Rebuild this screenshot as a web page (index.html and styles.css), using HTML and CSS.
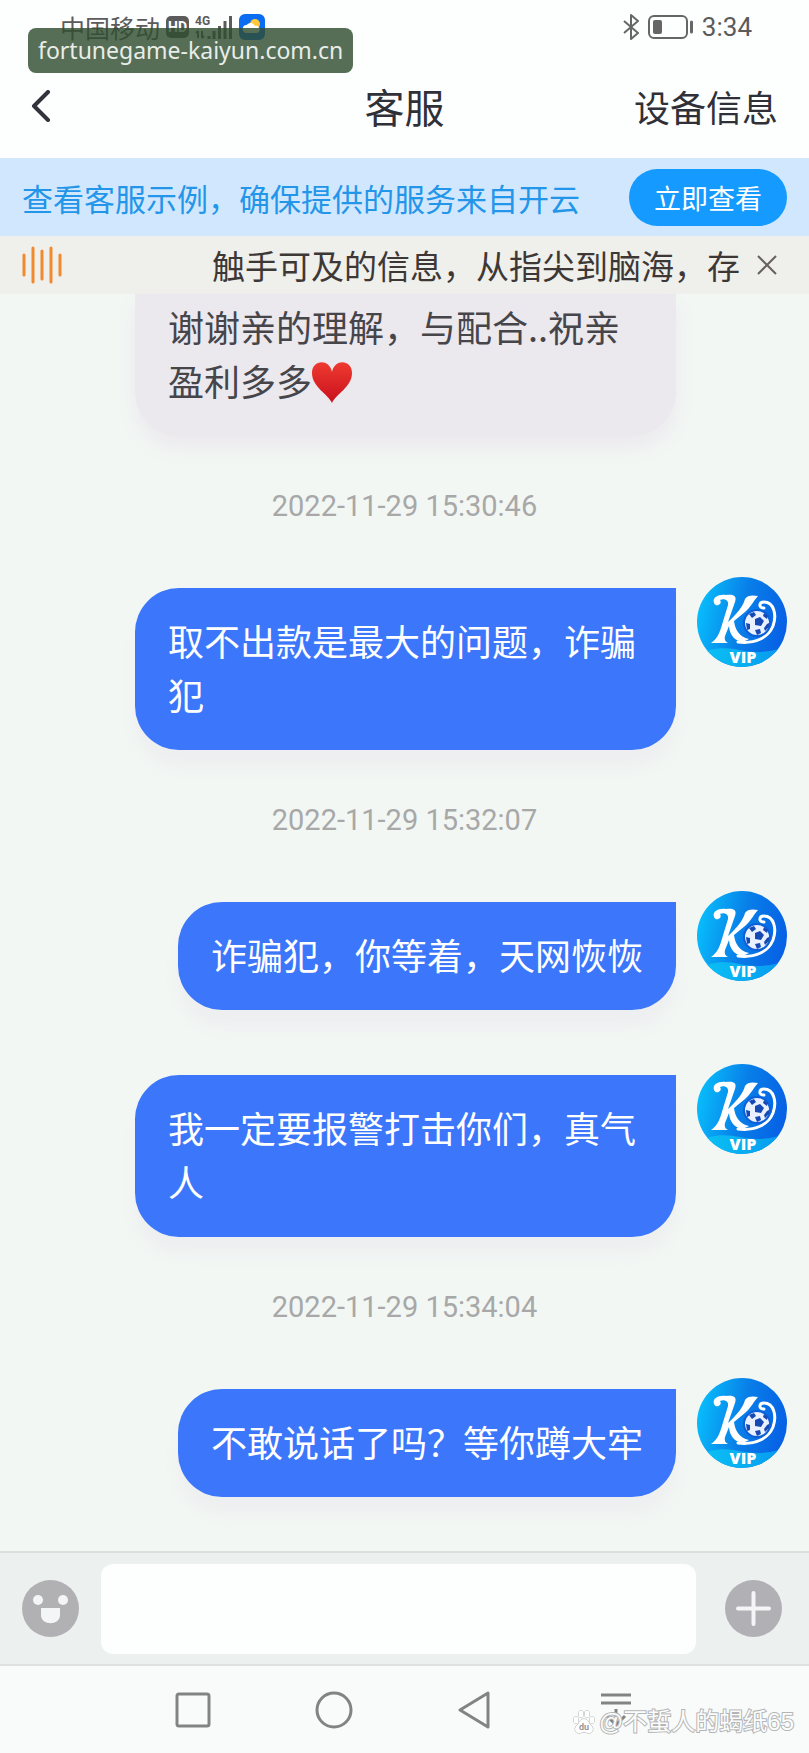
FILE: index.html
```html
<!DOCTYPE html>
<html lang="zh-CN">
<head>
<meta charset="utf-8">
<meta name="viewport" content="width=device-width, initial-scale=1">
<title>客服</title>
<link rel="stylesheet" href="styles.css">
</head>
<body>
<svg class="defs" width="0" height="0" aria-hidden="true">
  <defs>
    <linearGradient id="disc" x1="0" y1="0.4" x2="1" y2="0.6">
      <stop offset="0" stop-color="#08bdfb"/><stop offset="0.5" stop-color="#087ee8"/><stop offset="1" stop-color="#075fe5"/>
    </linearGradient>
    <linearGradient id="wave" x1="0" y1="0" x2="1" y2="0">
      <stop offset="0" stop-color="#0bc4f4"/><stop offset="1" stop-color="#0798ef"/>
    </linearGradient>
    <clipPath id="round"><circle cx="45" cy="45" r="45"/></clipPath>
    <symbol id="avatar" viewBox="0 0 90 90">
      <g clip-path="url(#round)">
        <rect width="90" height="90" fill="url(#disc)"/>
        <path d="M0 80C16 68 32 71 48 74C64 76 78 75 90 68V90H0Z" fill="url(#wave)"/>
      </g>
      <path d="M17 26C15 20 22 17 29 18C37 17 40 19 38 25L31 45C41 36 46 29 48 22C50 18 56 18 61 19C57 23 54 30 48 35L37 44C38 52 42 60 52 62C43 68 33 62 32 49L28 59C27 63 29 65 31 66H14C20 62 22 57 24 51L31 28C32 23 27 21 23 23C26 27 19 31 17 26Z" fill="#fff"/>
      <path d="M67 31C61 31 62 25 67 25C77 25 80 38 76 49C71 61 58 67 41 65" fill="none" stroke="#fff" stroke-width="3" stroke-linecap="round"/>
      <circle cx="60" cy="46" r="13" fill="#e9f0ff" stroke="#0b5fd9" stroke-width="2"/>
      <path d="M58 42l5-2 4 4-3 5-6-1zM52 37l5-2 2 3-4 3zM67 36l4 3-1 3-4-3zM49 46l4 1 0 5-3 1zM58 53l5-1 1 4-4 2zM70 47l2-1 0 4-4 4-1-3z" fill="#1749b4"/>
      <text x="46" y="86" text-anchor="middle" class="vip">VIP</text>
    </symbol>
  </defs>
</svg>

<div class="screen">
  <div class="site-tag">fortunegame-kaiyun.com.cn</div>

  <div class="status">
    <div class="status-side network">
      <span class="carrier">中国移动</span>
      <span class="hd">HD</span>
      <svg width="38" height="26" viewBox="0 0 38 26" aria-label="4G">
        <text x="0" y="11" class="net">4G</text>
        <path d="M3 17v7M1 19l2-2M7 17v7M9 22l-2 2" stroke="#5b5b5b" stroke-width="2" fill="none"/>
        <path d="M14 22v3M19 17v8M24.500 12v13M30 7v18M35.500 2v23" stroke="#5b5b5b" stroke-width="3"/>
      </svg>
      <svg width="26" height="26" viewBox="0 0 26 26" aria-hidden="true">
        <rect width="26" height="26" rx="6" fill="#0a6cf0"/>
        <circle cx="16" cy="10" r="5" fill="#ffc83a"/>
        <path d="M8 19a4 4 0 0 1-.5-8A5 5 0 0 1 16 12a3.500 3.500 0 0 1 2 7z" fill="#fff"/>
      </svg>
    </div>
    <div class="status-side">
      <svg width="18" height="26" viewBox="0 0 18 26" fill="none" stroke="#666" stroke-width="2" stroke-linejoin="round" aria-hidden="true"><path d="M2 7l14 12-7 6V1l7 6L2 19"/></svg>
      <svg width="46" height="24" viewBox="0 0 46 24" aria-hidden="true"><rect x="1" y="1" width="38" height="22" rx="5" fill="none" stroke="#666" stroke-width="2"/><rect x="5" y="5" width="9" height="14" rx="2" fill="#666"/><path d="M43.500 7v10" stroke="#666" stroke-width="3" stroke-linecap="round"/></svg>
      <span class="clock">3:34</span>
    </div>
  </div>

  <header class="header">
    <button class="icon-button back" aria-label="返回"><svg width="20" height="32" viewBox="0 0 20 32" fill="none" stroke="#33333d" stroke-width="4" stroke-linecap="round" stroke-linejoin="round"><path d="M17 2L3 16l14 14"/></svg></button>
    <h1>客服</h1>
    <button class="device">设备信息</button>
  </header>

  <div class="banner">
    <span>查看客服示例，确保提供的服务来自开云</span>
    <button class="pill">立即查看</button>
  </div>

  <div class="ticker">
    <svg width="40" height="38" viewBox="0 0 40 38" stroke="#f0892f" stroke-width="3" stroke-linecap="round" aria-hidden="true"><path d="M2 9v20M11 2v34M20 5v28M29 2v34M38 9v20"/></svg>
    <p>触手可及的信息，从指尖到脑海，存</p>
    <button class="icon-button" aria-label="关闭"><svg width="20" height="20" viewBox="0 0 20 20" stroke="#66615f" stroke-width="2"><path d="M1 1l18 18M19 1L1 19"/></svg></button>
  </div>

  <main class="chat">
    <div class="bubble received">谢谢亲的理解，与配合..祝亲盈利多多<svg class="heart" viewBox="0 0 40 42" role="img" aria-label="红心"><defs><linearGradient id="red" x1="0" y1="0" x2="0" y2="1"><stop offset="0" stop-color="#ee3a30"/><stop offset="1" stop-color="#c9101c"/></linearGradient></defs><path d="M20 41C16 32 0 25 0 11C0-2 17-4 20 10C23-4 40-2 40 11C40 25 24 32 20 41Z" fill="url(#red)"/></svg></div>
    <time>2022-11-29 15:30:46</time>
    <div class="message"><div class="bubble sent">取不出款是最大的问题，诈骗犯</div><svg class="avatar"><use href="#avatar"/></svg></div>
    <time>2022-11-29 15:32:07</time>
    <div class="message"><div class="bubble sent">诈骗犯，你等着，天网恢恢</div><svg class="avatar"><use href="#avatar"/></svg></div>
    <div class="message"><div class="bubble sent">我一定要报警打击你们，真气人</div><svg class="avatar"><use href="#avatar"/></svg></div>
    <time>2022-11-29 15:34:04</time>
    <div class="message"><div class="bubble sent">不敢说话了吗？等你蹲大牢</div><svg class="avatar"><use href="#avatar"/></svg></div>
  </main>

  <form class="composer">
    <button type="button" class="icon-button" aria-label="表情"><svg width="57" height="57" viewBox="0 0 57 57"><circle cx="28.500" cy="28.500" r="28.500" fill="#b1b0b3"/><circle cx="16" cy="20" r="5" fill="#f3f5f6"/><circle cx="41" cy="20" r="5" fill="#f3f5f6"/><path d="M19 28h19v7c0 11-19 11-19 0z" fill="#f3f5f6"/></svg></button>
    <input type="text" aria-label="输入消息">
    <button type="button" class="icon-button more" aria-label="更多"><svg width="57" height="57" viewBox="0 0 57 57"><circle cx="28.500" cy="28.500" r="28.500" fill="#b0b0b5"/><path d="M28.500 13v31M13 28.500h31" stroke="#f5f5f8" stroke-width="4" stroke-linecap="round"/></svg></button>
  </form>

  <nav class="system-nav" aria-label="系统导航">
    <button class="icon-button" aria-label="最近任务"><svg width="38" height="38" viewBox="0 0 38 38"><rect x="3" y="3" width="32" height="32" rx="2"/></svg></button>
    <button class="icon-button" aria-label="主页"><svg width="38" height="38" viewBox="0 0 38 38"><circle cx="19" cy="19" r="17"/></svg></button>
    <button class="icon-button" aria-label="后退"><svg width="38" height="38" viewBox="0 0 38 38"><path d="M32 2v34L4 19z"/></svg></button>
    <button class="icon-button" aria-label="通知栏"><svg width="38" height="38" viewBox="0 0 38 38"><path d="M4 4h30M4 12h30M19 18v16M10 25l9 9 9-9"/></svg></button>
  </nav>

  <div class="credit">
    <svg width="22" height="24" viewBox="0 0 22 24" fill="#fff" stroke="#aaa" aria-hidden="true"><ellipse cx="3" cy="10" rx="2.500" ry="3.500"/><ellipse cx="8" cy="4" rx="2.500" ry="3.500"/><ellipse cx="14" cy="4" rx="2.500" ry="3.500"/><ellipse cx="19" cy="10" rx="2.500" ry="3.500"/><path d="M11 9c4 0 4 4 7 6 4 4 1 9-3 8-3-1-5-1-8 0-4 1-7-4-3-8 3-2 3-6 7-6z"/><text x="11" y="20" text-anchor="middle" class="du">du</text></svg>
    <span>@不蜇人的蝎纸65</span>
  </div>
</div>
</body>
</html>
```

FILE: styles.css
```css
* { box-sizing: border-box; }

body {
  margin: 0;
  font-family: "Noto Sans CJK SC", sans-serif;
  color: #303038;
}

button {
  border: 0;
  padding: 0;
  background: none;
  font: inherit;
  color: inherit;
}

h1, p { margin: 0; font-weight: 400; }
svg { display: block; flex: none; }
.defs { position: absolute; }
.icon-button { display: flex; flex: none; }

.screen {
  position: relative;
  display: flex;
  flex-direction: column;
  min-height: 100vh;
  background: #f2f7f4;
}

.site-tag {
  position: absolute;
  z-index: 1;
  top: 28px;
  left: 28px;
  padding: 0 10px;
  border-radius: 8px;
  background: rgba(48, 76, 47, 0.81);
  color: #e9ede9;
  font: 23px/45px "Noto Sans", sans-serif;
}

.status {
  display: flex;
  justify-content: space-between;
  align-items: center;
  height: 54px;
  padding: 0 57px 0 60px;
  background: #fdfefe;
  color: #5b5b5b;
}

.status-side { display: flex; align-items: center; gap: 8px; }
.network { gap: 6px; }
.carrier { font-size: 25px; line-height: 36px; }
.hd {
  width: 23px;
  border-radius: 5px;
  background: #5b5b5b;
  color: #fff;
  font: 700 14px/22px Roboto, sans-serif;
  text-align: center;
}
.net { font: 700 12px Roboto, sans-serif; fill: #5b5b5b; }
.clock { font: 26px/32px Roboto, sans-serif; }

.header {
  display: grid;
  grid-template-columns: 1fr auto 1fr;
  align-items: center;
  height: 104px;
  padding: 0 31px;
  background: #fdfefe;
}
.header h1 { font-size: 40px; line-height: 56px; }
.device { justify-self: end; font-size: 36px; line-height: 56px; }

.banner {
  display: flex;
  align-items: center;
  justify-content: space-between;
  height: 78px;
  padding: 0 22px;
  background: #d1e7fd;
  color: #2396ea;
  font-size: 31px;
}
.pill {
  padding: 0 25px;
  border-radius: 29px;
  background: #159bff;
  color: #fff;
  font-size: 27px;
  line-height: 57px;
}

.ticker {
  display: flex;
  align-items: center;
  height: 58px;
  padding: 0 32px 0 22px;
  background: #efefeb;
  color: #3d3836;
}
.ticker p {
  flex: 1;
  margin: 0 16px 0 150px;
  overflow: hidden;
  white-space: nowrap;
  font-size: 33px;
  line-height: 56px;
}

.chat {
  display: flex;
  flex: 1;
  flex-direction: column;
  gap: 54px;
  padding: 0 22px 52px;
}

.bubble {
  max-width: 541px;
  padding: 25px 33px 29px;
  border-radius: 44px;
  font-size: 36px;
  line-height: 54px;
}
.received {
  align-self: flex-start;
  margin-left: 113px;
  padding-top: 5px;
  border-radius: 0 0 44px 44px;
  background: #ebe8ee;
  box-shadow: 0 12px 20px #ece9ee;
  color: #45454a;
}
.sent {
  margin-top: 11px;
  border-top-right-radius: 0;
  background: #3c76fb;
  box-shadow: 0 18px 16px #eeeff0;
  color: #fff;
}
.heart { display: inline-block; width: 40px; height: 42px; vertical-align: -8px; }

time {
  align-self: center;
  color: #a8a8a8;
  font: 29px/33px Roboto, sans-serif;
}

.message {
  display: flex;
  justify-content: flex-end;
  align-items: flex-start;
  gap: 21px;
}
.avatar { width: 90px; height: 90px; }
.vip { font: 800 16px "Open Sans", sans-serif; fill: #fff; }

.composer {
  display: flex;
  align-items: center;
  gap: 22px;
  height: 115px;
  padding: 0 27px 0 22px;
  border-top: 2px solid #dcdfe0;
  border-bottom: 2px solid #e0e1df;
  background: #ecf1ef;
}
.composer input {
  flex: 1;
  min-width: 0;
  height: 90px;
  padding: 0 24px;
  border: 0;
  border-radius: 12px;
  background: #fdfefe;
  font: inherit;
  font-size: 36px;
}
.more { margin-left: 7px; }

.system-nav {
  display: flex;
  justify-content: center;
  align-items: center;
  gap: 103px;
  height: 87px;
  background: #f8fbfa;
}
.system-nav svg { fill: none; stroke: #838383; stroke-width: 3; stroke-linejoin: round; }

.credit {
  position: absolute;
  right: 15px;
  bottom: 14px;
  display: flex;
  align-items: center;
  gap: 4px;
  color: #fbfcfc;
  font-family: "Liberation Sans", "Noto Sans CJK SC", sans-serif;
  font-size: 24px;
  line-height: 34px;
  -webkit-text-stroke: 2px #b4b4b4;
  paint-order: stroke fill;
}
.du { font: 700 9px Roboto, sans-serif; fill: #999; stroke: none; -webkit-text-stroke: 0; }
```
